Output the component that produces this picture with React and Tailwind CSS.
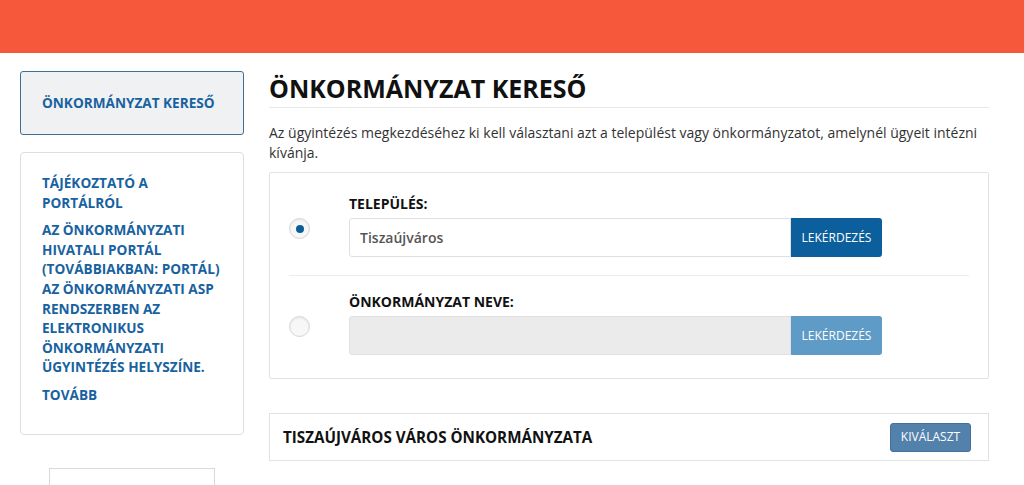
import React, { useState } from 'react';

const font = { fontFamily: '"Open Sans", "Noto Sans", sans-serif' };

// Sidebar hivatkozások
const sideLinks = [
  'TÁJÉKOZTATÓ A PORTÁLRÓL',
  'AZ ÖNKORMÁNYZATI HIVATALI PORTÁL (TOVÁBBIAKBAN: PORTÁL) AZ ÖNKORMÁNYZATI ASP RENDSZERBEN AZ ELEKTRONIKUS ÖNKORMÁNYZATI ÜGYINTÉZÉS HELYSZÍNE.',
];

function Radio({ checked, onClick }) {
  return (
    <button
      onClick={onClick}
      className="w-[21px] h-[21px] rounded-full border border-[#d6d6d6] bg-[#f7f7f7] flex items-center justify-center shadow-[inset_0_1px_2px_rgba(0,0,0,0.08)]"
    >
      {checked && <span className="w-[8px] h-[8px] rounded-full bg-[#0b5f99]" />}
    </button>
  );
}

function SearchRow({ label, value, active, onSelect }) {
  return (
    <div className="flex items-center">
      <div className="w-[79px] pl-[19px] pt-[6px]">
        <Radio checked={active} onClick={onSelect} />
      </div>
      <div className="flex flex-col">
        <label className="text-[14px] font-bold text-[#111] leading-[20px] mb-[4px]">{label}</label>
        <div className="flex">
          <div
            className={`w-[442px] h-[39px] border border-[#e0e0e0] rounded-l-[3px] px-[10px] flex items-center text-[14px] font-semibold text-[#555] ${active ? 'bg-white' : 'bg-[#ebebeb]'}`}
          >
            {value}
          </div>
          <button
            className={`w-[91px] h-[39px] rounded-r-[3px] text-[12px] text-white ${active ? 'bg-[#0a5f9c]' : 'bg-[#5e9bc6]'}`}
          >
            LEKÉRDEZÉS
          </button>
        </div>
      </div>
    </div>
  );
}

export default function App() {
  const [selected, setSelected] = useState(0);

  return (
    <div style={font} className="bg-white overflow-hidden h-[485px]">
      <div className="h-[53px] bg-[#f5583b]" />

      <div className="flex pl-[20px] pt-[18px]">
        {/* Oldalsáv */}
        <aside className="w-[224px] flex flex-col">
          <div className="h-[64px] border border-[#3d6f99] rounded-[3px] bg-[#f0f1f3] flex items-center pl-[21px]">
            <span className="text-[13.6px] font-bold text-[#1862a0]">ÖNKORMÁNYZAT KERESŐ</span>
          </div>

          <div className="mt-[17px] h-[283px] border border-[#dedede] rounded-[4px] pt-[20px] pl-[21px] pr-[12px]">
            {sideLinks.map((t) => (
              <p key={t} className="text-[13.6px] font-bold text-[#1862a0] leading-[19.6px] mb-[8px]">{t}</p>
            ))}
            <p className="text-[13.6px] font-bold text-[#1862a0] leading-[19.6px] mt-[8px]">TOVÁBB</p>
          </div>

          <div className="mt-[33px] ml-[29px] w-[166px] h-[40px] border border-[#d9d9d9] border-b-0" />
        </aside>

        {/* Tartalom */}
        <main className="ml-[25px] w-[720px]">
          <h1 className="text-[25px] font-bold text-[#111] leading-[34px] pb-[2px] border-b border-[#e8e8e8]">
            ÖNKORMÁNYZAT KERESŐ
          </h1>
          <p className="mt-[15px] text-[14px] text-[#333] leading-[20px]">
            Az ügyintézés megkezdéséhez ki kell választani azt a települést vagy önkormányzatot, amelynél ügyeit intézni kívánja.
          </p>

          <div className="mt-[9px] border border-[#e2e2e2] rounded-[2px] h-[207px] pt-[21px]">
            <SearchRow label="TELEPÜLÉS:" value="Tiszaújváros" active={selected === 0} onSelect={() => setSelected(0)} />
            <div className="mx-[19px] mt-[18px] mb-[16px] border-t border-[#ececec]" />
            <SearchRow label="ÖNKORMÁNYZAT NEVE:" value="" active={selected === 1} onSelect={() => setSelected(1)} />
          </div>

          <div className="mt-[34px] h-[48px] border border-[#e2e2e2] flex items-center justify-between pl-[13px] pr-[17px]">
            <span className="text-[15.2px] font-bold text-[#111]">TISZAÚJVÁROS VÁROS ÖNKORMÁNYZATA</span>
            <button className="w-[81px] h-[29px] rounded-[3px] bg-[#5281ab] border border-[#43719b] text-[12px] text-white">
              KIVÁLASZT
            </button>
          </div>
        </main>
      </div>
    </div>
  );
}
